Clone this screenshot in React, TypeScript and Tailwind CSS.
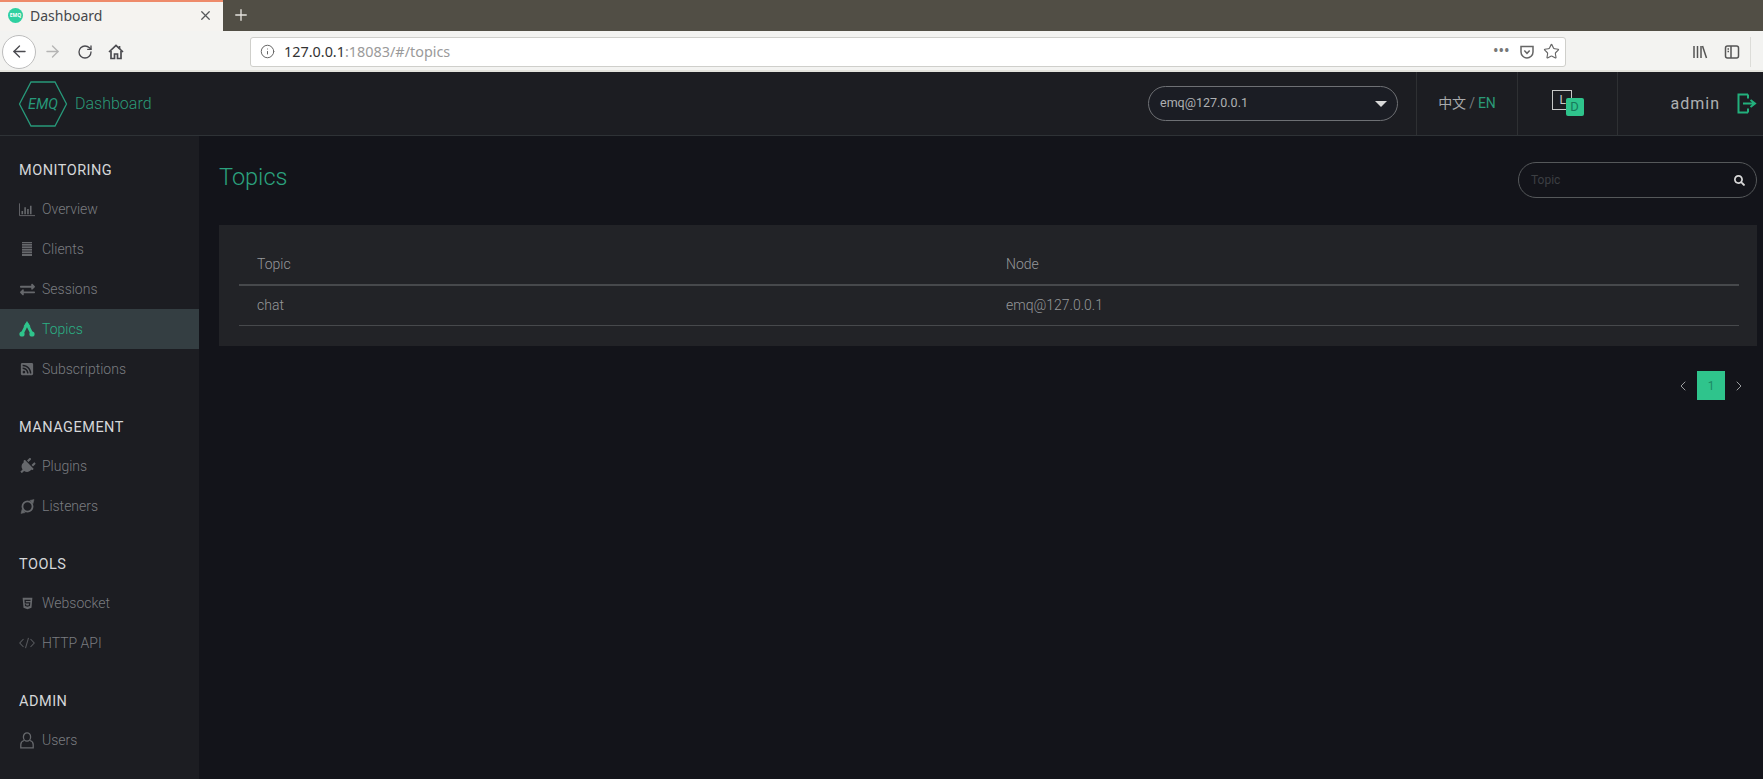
import React from "react";
import { FaExchangeAlt, FaHtml5, FaPlug, FaRssSquare, FaSearch } from "react-icons/fa";
import { Info, Star, X, Plus, ArrowLeft, ArrowRight, RotateCw, ChevronLeft, ChevronRight } from "lucide-react";

const gray = "#66686c";

function OverviewIcon() {
  return (
    <svg viewBox="0 0 17 15" className="w-[17px] h-[15px]" fill="none" stroke={gray} strokeWidth="1">
      <path d="M0.5 1 V14 H17" />
      <path d="M3.5 12.5 V9 M6.5 12.5 V5 M9.5 12.5 V7 M12.5 12.5 V3.5" strokeWidth="1.7" />
    </svg>
  );
}
function ClientsIcon() {
  return (
    <svg viewBox="0 0 14 16" className="w-[14px] h-[16px]" fill="none" stroke={gray}>
      <rect x="2" y="1" width="10" height="14" fill={gray} stroke="none" />
      <path d="M0 2.5 H14 M0 5 H14 M0 7.5 H14 M0 10 H14 M0 12.5 H14" stroke="#1c1d22" strokeWidth="0.7" />
    </svg>
  );
}
function TopicsIcon() {
  return (
    <svg viewBox="0 0 16 16" className="w-[16px] h-[16px]" fill="none" stroke="#2fc48c" strokeWidth="2.8">
      <path d="M8 3 L3.2 12.5 M8 3 L12.8 12.5" />
      <path d="M8 0 L11.5 5.5 H4.5 Z" fill="#2fc48c" stroke="none" />
      <circle cx="3" cy="13" r="2.6" fill="#2fc48c" stroke="none" />
      <circle cx="13" cy="13" r="2.6" fill="#2fc48c" stroke="none" />
    </svg>
  );
}
function ListenerIcon() {
  return (
    <svg viewBox="0 0 16 16" className="w-[15px] h-[15px]" fill="none" stroke={gray} strokeWidth="1.9">
      <circle cx="8" cy="8" r="5.4" />
      <path d="M10.5 1.5 L15 0.5 L13.8 5 Z M5.5 14.5 L1 15.5 L2.2 11 Z" fill={gray} strokeWidth="0.5" />
    </svg>
  );
}
function CodeIcon() {
  return (
    <svg viewBox="0 0 16 12" className="w-[16px] h-[12px]" fill="none" stroke="#55575b" strokeWidth="1.1">
      <path d="M4.5 2 L0.8 6 L4.5 10 M11.5 2 L15.2 6 L11.5 10 M9.5 0.8 L6.5 11.2" />
    </svg>
  );
}
function UserIcon() {
  return (
    <svg viewBox="0 0 14 17" className="w-[14px] h-[17px]" fill="none" stroke={gray} strokeWidth="1.3">
      <ellipse cx="7" cy="5" rx="3.6" ry="4.2" />
      <path d="M4 8.5 C1.8 9.2 0.8 10.6 0.8 12.4 V15.8 H13.2 V12.4 C13.2 10.6 12.2 9.2 10 8.5" />
    </svg>
  );
}
function HomeIcon() {
  return (
    <svg viewBox="0 0 16 16" className="w-[16px] h-[16px]" fill="none" stroke="#4a4a4f" strokeWidth="1.7">
      <path d="M1 8 L8 1.5 L15 8" />
      <path d="M3 7 V14.5 H6.5 V10 H9.5 V14.5 H13 V7" />
      <path d="M11.5 2 V5" />
    </svg>
  );
}

const sections: { title: string; items: { label: string; icon: React.ReactNode; active?: boolean }[] }[] = [
  {
    title: "MONITORING",
    items: [
      { label: "Overview", icon: <OverviewIcon /> },
      { label: "Clients", icon: <ClientsIcon /> },
      { label: "Sessions", icon: <FaExchangeAlt size={15} color={gray} /> },
      { label: "Topics", icon: <TopicsIcon />, active: true },
      { label: "Subscriptions", icon: <FaRssSquare size={14} color={gray} /> },
    ],
  },
  {
    title: "MANAGEMENT",
    items: [
      { label: "Plugins", icon: <FaPlug size={17} color={gray} className="rotate-45" /> },
      { label: "Listeners", icon: <ListenerIcon /> },
    ],
  },
  {
    title: "TOOLS",
    items: [
      { label: "Websocket", icon: <FaHtml5 size={13} color={gray} /> },
      { label: "HTTP API", icon: <CodeIcon /> },
    ],
  },
  {
    title: "ADMIN",
    items: [{ label: "Users", icon: <UserIcon /> }],
  },
];

function BrowserChrome() {
  return (
    <div className="shrink-0 font-['Noto_Sans',sans-serif]">
      <div className="h-[31px] bg-[#514e45] flex">
        <div className="w-[223px] h-[31px] bg-[#f5f3f0] border-t-2 border-[#ee8a6a] flex items-center pl-[8px] pr-[10px] pb-[2px]">
          <div className="w-[15px] h-[15px] rounded-full bg-[#2fd0a0] flex items-center justify-center text-[5px] text-white font-bold">EMQ</div>
          <span className="ml-[7px] text-[14px] text-[#45474b] flex-1">Dashboard</span>
          <X size={15} strokeWidth={2} color="#55575a" />
        </div>
        <div className="w-[36px] flex items-center justify-center pb-[2px]">
          <Plus size={18} strokeWidth={1.8} color="#e4e2dd" />
        </div>
      </div>
      <div className="h-[41px] bg-[#f3f3f1] border-b-2 border-[#e3e3dd] pt-[2px] flex items-center">
        <div className="ml-[2px] w-[34px] h-[34px] rounded-full bg-white border border-[#bdbdbd] flex items-center justify-center">
          <ArrowLeft size={19} strokeWidth={1.7} color="#4a4a4f" />
        </div>
        <div className="ml-[6px] w-[20px] flex justify-center">
          <ArrowRight size={19} strokeWidth={1.7} color="#b4b4b4" />
        </div>
        <div className="ml-[13px] w-[20px] flex justify-center">
          <RotateCw size={16} strokeWidth={2} color="#4a4a4f" />
        </div>
        <div className="ml-[11px] w-[20px] flex justify-center">
          <HomeIcon />
        </div>
        <div className="ml-[124px] w-[1316px] h-[30px] bg-white border border-[#cfcfcb] rounded-[3px] flex items-center pl-[9px] pr-[5px] text-[14.4px]">
          <Info size={15} strokeWidth={1.6} color="#666" />
          <span className="ml-[9px] text-[#333]">127.0.0.1</span>
          <span className="text-[#9a9a9a]">:18083/#/topics</span>
          <span className="flex-1" />
          <span className="text-[#777] font-bold tracking-[1px] text-[12px] mr-[9px] -mt-[2px]">•••</span>
          <svg viewBox="0 0 16 16" className="w-[16px] h-[16px] mr-[8px]" fill="none" stroke="#666" strokeWidth="1.5">
            <path d="M2 2.5 H14 V8 C14 11.5 11 14 8 14 C5 14 2 11.5 2 8 Z" />
            <path d="M5.3 6.5 L8 9.3 L10.7 6.5" />
          </svg>
          <Star size={17} strokeWidth={1.6} color="#666" />
        </div>
        <div className="ml-[126px] flex items-center gap-[16px]">
          <svg viewBox="0 0 16 16" className="w-[16px] h-[16px]" fill="none" stroke="#555" strokeWidth="1.5">
            <path d="M2 2 V14 M5.5 2 V14 M9 2 V14 M10.5 2 L14.5 14" />
          </svg>
          <svg viewBox="0 0 16 16" className="w-[16px] h-[16px]" fill="none" stroke="#555" strokeWidth="1.5">
            <rect x="1.5" y="2" width="13" height="12" rx="2" />
            <path d="M7 2 V14 M3.5 5 H5 M3.5 7.5 H5" />
          </svg>
        </div>
        <div className="ml-[10px] w-px h-[30px] bg-[#dcdcd8]" />
      </div>
    </div>
  );
}

function Header() {
  return (
    <header className="h-[64px] shrink-0 bg-[#1c1d22] border-b border-[#2e3236] flex items-center">
      <svg viewBox="0 0 50 46" className="ml-[18px] w-[50px] h-[46px]" fill="none" stroke="#27997a" strokeWidth="1.3">
        <path d="M1.5 23 L13 1 H37 L48.5 23 L37 45 H13 Z" />
        <text x="25" y="28" textAnchor="middle" fontSize="14.5" fontStyle="italic" fill="#27997a" stroke="none" fontFamily="Roboto, sans-serif">EMQ</text>
      </svg>
      <span className="ml-[7px] text-[16px] font-light text-[#2b9a78]">Dashboard</span>
      <div className="flex-1" />
      <div className="w-[250px] h-[35px] rounded-full border border-[#6e7074] bg-[#1b1d24] flex items-center pl-[11px] pr-[10px] text-[12.5px] text-[#aeb0b2]">
        <span className="flex-1">emq@127.0.0.1</span>
        <span className="w-0 h-0 border-l-[6px] border-r-[6px] border-t-[6px] border-l-transparent border-r-transparent border-t-[#d8d8d8]" />
      </div>
      <div className="ml-[18px] w-[101px] h-full border-l border-[#2e3033] flex items-center justify-center text-[14px] text-[#a8aaac]">
        <span>中文</span>
        <span className="mx-[3px] text-[#77797c]">/</span>
        <span className="text-[#2b9a78]">EN</span>
      </div>
      <div className="w-[100px] h-full border-l border-[#2e3033] flex items-center justify-center">
        <div className="relative w-[32px] h-[26px] -mt-[2px]">
          <div className="absolute left-0 top-0 w-[20px] h-[20px] border border-[#c8c8c8] text-[12px] leading-[18px] text-[#c8c8c8] pl-[7px]">L</div>
          <div className="absolute left-[14px] top-[8px] w-[18px] h-[18px] rounded-[2px] bg-[#2fc48c] text-[13px] leading-[18px] text-center text-[#17795a]">D</div>
        </div>
      </div>
      <div className="w-[146px] h-full border-l border-[#2e3033] flex items-center justify-end pr-[6px]">
        <span className="text-[16px] tracking-[1px] text-[#aeb0b2] mr-[17px]">admin</span>
        <svg viewBox="0 0 20 21" className="w-[20px] h-[21px]" fill="none" stroke="#22b07c" strokeWidth="2">
          <path d="M11 1.5 H1.5 V19.5 H11 M11 1.5 V5.5 M11 15.5 V19.5" />
          <path d="M6 10.5 H17 M13.5 7 L18 10.5 L13.5 14" />
        </svg>
      </div>
    </header>
  );
}

function Sidebar() {
  return (
    <aside className="w-[199px] shrink-0 bg-[#1c1d22] pt-[13px] flex flex-col gap-[17px]">
      {sections.map((s) => (
        <div key={s.title}>
          <div className="h-[40px] pl-[19px] pt-[3px] flex items-center text-[14.5px] tracking-[0.5px] text-[#d5d7d9]">{s.title}</div>
          {s.items.map((i) => (
            <div key={i.label} className={`h-[40px] pl-[19px] flex items-center text-[14px] font-light ${i.active ? "bg-[#343e42] text-[#2bb084]" : "text-[#7a7c80]"}`}>
              <span className="w-[16px] flex justify-center">{i.icon}</span>
              <span className="ml-[7px]">{i.label}</span>
            </div>
          ))}
        </div>
      ))}
    </aside>
  );
}

function Main() {
  return (
    <main className="flex-1 bg-[#13141a] pl-[20px] pr-[6px] pt-[26px]">
      <div className="flex items-center justify-between h-[36px]">
        <h1 className="text-[23.5px] font-light text-[#2ba27e] -mt-[5px]">Topics</h1>
        <div className="w-[239px] h-[36px] rounded-full border border-[#55585a] flex items-center pl-[12px] pr-[11px] text-[12px] text-[#3c3f43]">
          <span className="flex-1">Topic</span>
          <FaSearch size={11} color="#d8d8d8" />
        </div>
      </div>
      <div className="mt-[27px] h-[121px] bg-[#222327] pl-[20px] pr-[18px]">
        <div className="grid grid-cols-[767px_1fr] h-[61px] items-end border-b-2 border-[#47494c] text-[14px] font-light text-[#96989a]">
          <span className="pl-[18px] pb-[9px]">Topic</span>
          <span className="pb-[9px]">Node</span>
        </div>
        <div className="grid grid-cols-[767px_1fr] h-[40px] items-center border-b border-[#47494c] text-[14px] font-light text-[#96989a]">
          <span className="pl-[18px]">chat</span>
          <span>emq@127.0.0.1</span>
        </div>
      </div>
      <div className="mt-[25px] flex items-center justify-end gap-[6px] pr-[10px]">
        <ChevronLeft size={16} strokeWidth={1.5} color="#9a9c9e" />
        <div className="w-[28px] h-[29px] bg-[#2fc48c] flex items-center justify-center text-[12px] text-[#1b8a64]">1</div>
        <ChevronRight size={16} strokeWidth={1.5} color="#9a9c9e" />
      </div>
    </main>
  );
}

export default function App() {
  return (
    <div className="w-[1763px] h-[779px] overflow-hidden flex flex-col font-['Roboto','Noto_Sans_CJK_SC',sans-serif]">
      <BrowserChrome />
      <Header />
      <div className="flex flex-1 min-h-0">
        <Sidebar />
        <Main />
      </div>
    </div>
  );
}
